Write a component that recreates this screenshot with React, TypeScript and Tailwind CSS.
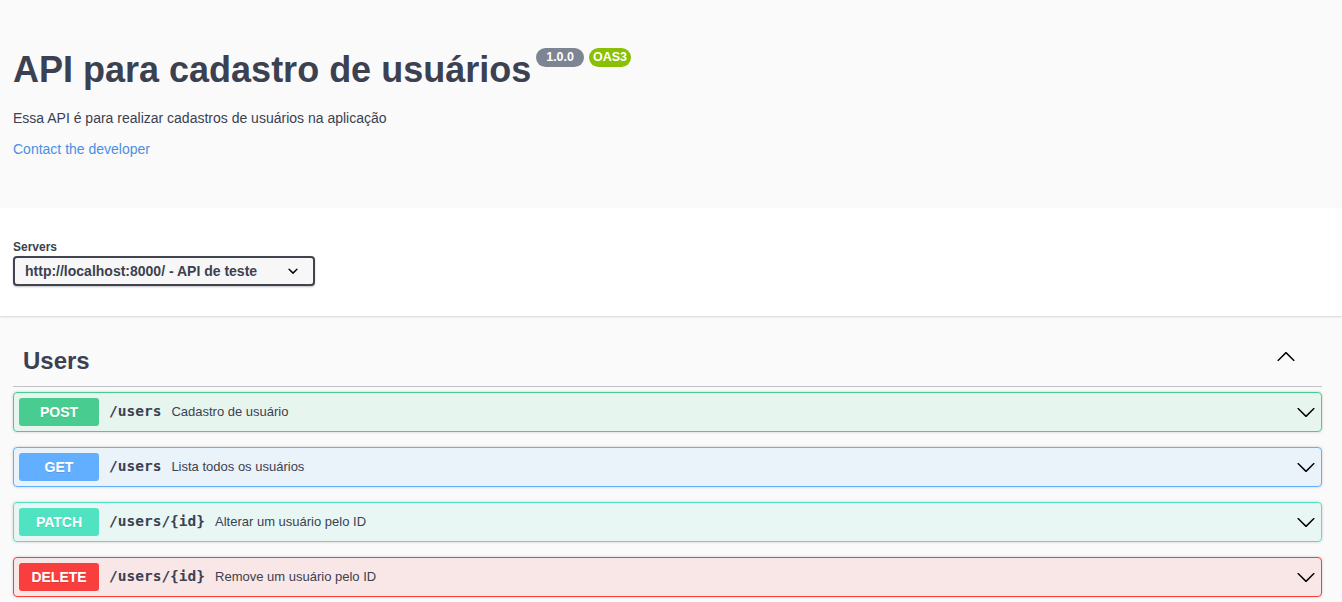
import React from "react";

const ArrowDown = () => (
  <svg width="20" height="20" viewBox="0 0 20 20" className="shrink-0" fill="#000">
    <path d="M17.418 6.109c.272-.268.709-.268.979 0s.271.701 0 .969l-7.908 7.83c-.27.268-.707.268-.979 0l-7.908-7.83c-.27-.268-.27-.701 0-.969.271-.268.709-.268.979 0L10 13.25l7.418-7.141z" />
  </svg>
);

const ArrowUp = () => (
  <svg width="20" height="20" viewBox="0 0 20 20" className="shrink-0" fill="#000">
    <g transform="rotate(180 10 10.5)">
      <path d="M17.418 6.109c.272-.268.709-.268.979 0s.271.701 0 .969l-7.908 7.83c-.27.268-.707.268-.979 0l-7.908-7.83c-.27-.268-.27-.701 0-.969.271-.268.709-.268.979 0L10 13.25l7.418-7.141z" />
    </g>
  </svg>
);

type Op = {
  method: string;
  path: string;
  desc: string;
  wrap: string;
  badge: string;
};

const ops: Op[] = [
  {
    method: "POST",
    path: "/users",
    desc: "Cadastro de usuário",
    wrap: "border-[#49cc90] bg-[rgba(73,204,144,0.1)]",
    badge: "bg-[#49cc90]",
  },
  {
    method: "GET",
    path: "/users",
    desc: "Lista todos os usuários",
    wrap: "border-[#61affe] bg-[rgba(97,175,254,0.1)]",
    badge: "bg-[#61affe]",
  },
  {
    method: "PATCH",
    path: "/users/{id}",
    desc: "Alterar um usuário pelo ID",
    wrap: "border-[#50e3c2] bg-[rgba(80,227,194,0.1)]",
    badge: "bg-[#50e3c2]",
  },
  {
    method: "DELETE",
    path: "/users/{id}",
    desc: "Remove um usuário pelo ID",
    wrap: "border-[#f93e3e] bg-[rgba(249,62,62,0.1)]",
    badge: "bg-[#f93e3e]",
  },
];

export default function App() {
  return (
    <div className="min-h-screen bg-[#fafafa] text-[#3b4151] font-['Liberation_Sans',Arial,sans-serif]">
      {/* Info */}
      <div className="h-[208px] pl-[13px] pr-[20px] pt-[48px]">
        <div className="flex items-start">
          <h2 className="mt-[4px] text-[36px] leading-[36px] font-bold text-[#3b4151]">
            API para cadastro de usuários
          </h2>
          <span className="ml-[5px] h-[19px] px-[10px] rounded-full bg-[#7d8492] text-white text-[12.5px] leading-[19px] font-bold">
            1.0.0
          </span>
          <span className="ml-[5px] h-[19px] px-[4px] rounded-full bg-[#89bf04] text-white text-[12.5px] leading-[19px] font-bold">
            OAS3
          </span>
        </div>
        <p className="mt-[20px] text-[14px] leading-[20px]">
          Essa API é para realizar cadastros de usuários na aplicação
        </p>
        <a className="mt-[11px] block w-max text-[14px] leading-[20px] text-[#4990e2]" href="#">
          Contact the developer
        </a>
      </div>

      {/* Servers */}
      <div className="bg-white shadow-[0_1px_2px_0_rgba(0,0,0,0.15)] py-[30px] pl-[13px] pr-[20px]">
        <div className="text-[12px] leading-[18px] font-bold">Servers</div>
        <div className="flex items-center w-[302px] h-[30px] border-2 border-[#41444e] rounded-[4px] bg-[#f7f7f7] shadow-[0_1px_2px_0_rgba(0,0,0,0.25)] pl-[10px] pr-[10px]">
          <span className="text-[14px] font-bold leading-[18px] text-[#3b4151]">
            http://localhost:8000/ - API de teste
          </span>
          <svg width="20" height="20" viewBox="0 0 20 20" className="ml-auto shrink-0" fill="#000">
            <path d="M13.418 7.859a.695.695 0 0 1 .978 0 .68.68 0 0 1 0 .969l-3.908 3.83a.697.697 0 0 1-.979 0l-3.908-3.83a.68.68 0 0 1 0-.969.695.695 0 0 1 .978 0L10 11l3.418-3.141z" />
          </svg>
        </div>
      </div>

      {/* Tag section */}
      <div className="pl-[13px] pr-[20px] pt-[21px] pb-[20px]">
        <div className="flex items-start border-b border-[rgba(59,65,81,0.3)] pt-[9px] pb-[11px] pl-[10px] pr-[26px]">
          <h3 className="text-[24px] leading-[29px] font-bold">Users</h3>
          <div className="ml-auto">
            <ArrowUp />
          </div>
        </div>
        <div className="mt-[5px] flex flex-col gap-[15px]">
          {ops.map((op) => (
            <div
              key={op.method}
              className={`flex items-center h-[40px] border rounded-[4px] px-[5px] shadow-[0_0_3px_rgba(0,0,0,0.19)] ${op.wrap}`}
            >
              <span
                className={`flex items-center justify-center w-[80px] h-[28px] rounded-[3px] text-white text-[14px] font-bold [text-shadow:0_1px_0_rgba(0,0,0,0.1)] ${op.badge}`}
              >
                {op.method}
              </span>
              <span className="px-[10px] text-[14.5px] font-bold font-['DejaVu_Sans_Mono',monospace] text-[#3b4151]">
                {op.path}
              </span>
              <span className="text-[13px] text-[#3b4151]">{op.desc}</span>
              <div className="ml-auto flex items-center">
                <ArrowDown />
              </div>
            </div>
          ))}
        </div>
      </div>
    </div>
  );
}
